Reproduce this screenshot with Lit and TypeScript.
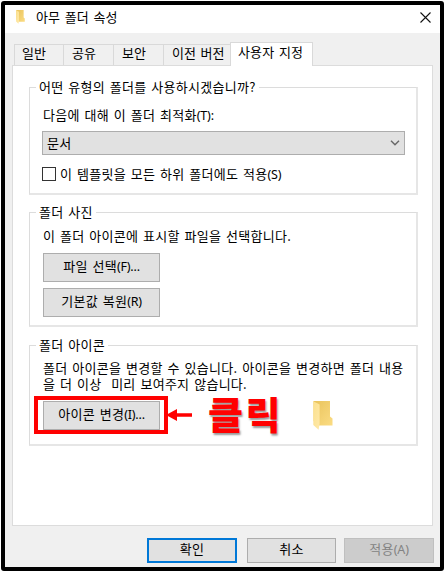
import { LitElement, html, css } from "lit";
import { customElement, property } from "lit/decorators.js";

@customElement("folder-icon")
class FolderIcon extends LitElement {
  static styles = css`
    :host { display: block; }
    svg { display: block; width: 100%; height: 100%; }
  `;
  render() {
    return html`<svg viewBox="0 0 20 29" preserveAspectRatio="none">
      <defs>
        <linearGradient id="back" x1="0" y1="0" x2="1" y2="1">
          <stop offset="0" stop-color="#e9c35c"></stop>
          <stop offset="1" stop-color="#fbdc83"></stop>
        </linearGradient>
        <linearGradient id="flap" x1="0" y1="0" x2="1" y2="1">
          <stop offset="0" stop-color="#fbe08e"></stop>
          <stop offset="1" stop-color="#ffe9a8"></stop>
        </linearGradient>
      </defs>
      <path d="M.5 0H17V15.5L19.5 17.5V24.5H6L.5 20Z" fill="url(#back)"></path>
      <path d="M.3.3L6.6 3.5V22.5L5.6 28.7L.3 24Z" fill="url(#flap)"></path>
    </svg>`;
  }
}

@customElement("push-button")
class PushButton extends LitElement {
  @property({ reflect: true }) kind = "normal";
  static styles = css`
    :host { display: block; box-sizing: border-box; }
    button {
      display: flex; align-items: center; justify-content: center;
      box-sizing: border-box; width: 100%; height: 100%; margin: 0; padding: 0 0 3px;
      border: 1px solid #adadad; background: #e1e1e1; color: #000;
      font: inherit; letter-spacing: inherit; word-spacing: inherit; white-space: nowrap;
    }
    :host([kind="primary"]) button { border: 2px solid #0078d7; }
    :host([kind="disabled"]) button { background: #ccc; border-color: #bfbfbf; color: #838383; }
  `;
  render() {
    return html`<button ?disabled=${this.kind === "disabled"}><span><slot></slot></span></button>`;
  }
}

@customElement("app-root")
class AppRoot extends LitElement {
  static styles = css`
    :host {
      display: block; box-sizing: border-box; width: 445px; height: 572px; padding: 1px;
      background: #fff; color: #000; overflow: hidden;
      font: 13px/16px "Noto Sans CJK KR", sans-serif;
      letter-spacing: .28px; word-spacing: 1.6px;
    }
    .window {
      box-sizing: border-box; width: 443px; height: 570px; border: 4px solid #000;
      border-radius: 3px; background: #f0f0f0; display: flex; flex-direction: column;
    }
    .title { height: 28px; flex: none; background: #fff; display: flex; align-items: center; padding: 0 9px 4px 11px; box-sizing: border-box; }
    .title folder-icon { width: 9px; height: 14px; margin-right: 11px; }
    .title span { flex: 1; margin-top: -1px; letter-spacing: .1px; }
    .close { width: 11px; height: 11px; }
    .tabs { height: 32px; flex: none; display: flex; align-items: flex-end; padding-left: 9px; box-sizing: border-box; }
    .tab {
      box-sizing: border-box; height: 21px; width: 50px; border: 1px solid #d9d9d9; border-width: 1px 1px 0 0;
      padding: 0 0 0 8px; white-space: nowrap; letter-spacing: 0;
    }
    .tab:first-child { border-left-width: 1px; padding-left: 7px; }
    .tab.wide { width: 66px; border-right: 0; }
    .tab.on { width: 83px; height: 24px; margin-bottom: -1px; border-width: 1px 1px 0 1px; background: #fff; padding: 1px 0 0 7px; position: relative; letter-spacing: .15px; }
    .page {
      flex: none; box-sizing: border-box; height: 461px; width: 421px; margin-left: 7px;
      border: 1px solid #dcdcdc; background: #fff; padding: 21px 14px 0 16px;
      display: flex; flex-direction: column;
    }
    .group {
      box-sizing: border-box; border: 1px solid #dcdcdc; border-right: 2px solid #e6e6e6; border-bottom: 2px solid #e6e6e6;
      width: 389px; padding: 0 12px 0 13px; flex: none; display: flex; flex-direction: column; align-items: flex-start;
    }
    .g1 { height: 108px; }
    .g2 { height: 115px; margin-top: 17px; }
    .g3 { height: 101px; margin-top: 18px; }
    .legend { margin: -9px 0 0 -7px; padding: 0 3px; background: #fff; height: 16px; white-space: nowrap; }
    .line { white-space: nowrap; height: 16px; }
    .g1 .line { margin-top: 12px; }
    .select {
      box-sizing: border-box; width: 363px; height: 24px; margin: 8px 0 0 -1px; border: 1px solid #adadad; background: #e1e1e1;
      display: flex; align-items: center; justify-content: space-between; padding: 0 4px 1px;
    }
    .chevron { width: 10px; height: 6px; }
    .check { display: flex; align-items: center; height: 16px; margin: 11px 0 0 -1px; white-space: nowrap; }
    .box { box-sizing: border-box; width: 14px; height: 14px; border: 1px solid #333; background: #fff; margin-right: 4px; }
    .g2 .line { margin-top: 8px; }
    .g2 push-button { width: 117px; height: 29px; margin-top: 9px; }
    .g2 push-button + push-button { margin-top: 6px; }
    .g3 .para { margin-top: 7px; white-space: pre; }
    .row { display: flex; align-items: center; margin: 4px 0 0 -9px; height: 38px; }
    .mark { box-sizing: border-box; width: 134px; height: 38px; border: 4px solid #f00; padding: 1px 4px 0 5px; }
    .mark push-button { width: 117px; height: 29px; }
    .arrow { width: 26px; height: 14px; margin-left: -2px; }
    .click {
      width: 72px; margin: -4px 0 0 16px; white-space: nowrap; color: #f00; font-weight: 900; font-size: 38px; line-height: 38px;
      letter-spacing: 2.5px; text-shadow: 1px 2px 2px #999;
    }
    .row folder-icon { width: 20px; height: 29px; margin: 0 0 0 33px; }
    .footer { display: flex; margin: 12px 0 0 142px; }
    .footer push-button { width: 90px; height: 25px; }
    .footer push-button:nth-child(2) { width: 89px; margin: 0 8px 0 10px; }
    .latin { font-family: "Noto Sans", sans-serif; font-size: 12.5px; letter-spacing: -.2px; line-height: 1; }
  `;

  render() {
    return html`<div class="window">
      <div class="title">
        <folder-icon></folder-icon><span>아무 폴더 속성</span>
        <svg class="close" viewBox="0 0 11 11"><path d="M.5 .5L10.5 10.5M10.5 .5L.5 10.5" stroke="#111" stroke-width="1.1"></path></svg>
      </div>
      <div class="tabs">
        <div class="tab">일반</div>
        <div class="tab">공유</div>
        <div class="tab">보안</div>
        <div class="tab wide">이전 버전</div>
        <div class="tab on">사용자 지정</div>
      </div>
      <div class="page">
        <div class="group g1">
          <div class="legend">어떤 유형의 폴더를 사용하시겠습니까?</div>
          <div class="line">다음에 대해 이 폴더 최적화<span class="latin">(T):</span></div>
          <div class="select">
            <span>문서</span>
            <svg class="chevron" viewBox="0 0 10 6"><path d="M1 .8L5 4.8L9 .8" fill="none" stroke="#666" stroke-width="1.4"></path></svg>
          </div>
          <div class="check"><span class="box"></span><span>이 템플릿을 모든 하위 폴더에도 적용<span class="latin">(S)</span></span></div>
        </div>
        <div class="group g2">
          <div class="legend">폴더 사진</div>
          <div class="line">이 폴더 아이콘에 표시할 파일을 선택합니다.</div>
          <push-button>파일 선택<span class="latin">(F)...</span></push-button>
          <push-button>기본값 복원<span class="latin">(R)</span></push-button>
        </div>
        <div class="group g3">
          <div class="legend">폴더 아이콘</div>
          <div class="para">폴더 아이콘을 변경할 수 있습니다. 아이콘을 변경하면 폴더 내용<br>을 더 이상  미리 보여주지 않습니다.</div>
          <div class="row">
            <div class="mark"><push-button>아이콘 변경<span class="latin">(I)...</span></push-button></div>
            <svg class="arrow" viewBox="0 0 26 14"><path d="M0 7L11 1V5.2H26V8.8H11V13Z" fill="#f00"></path></svg>
            <div class="click">클릭</div>
            <folder-icon></folder-icon>
          </div>
        </div>
      </div>
      <div class="footer">
        <push-button kind="primary">확인</push-button>
        <push-button>취소</push-button>
        <push-button kind="disabled">적용<span class="latin">(A)</span></push-button>
      </div>
    </div>`;
  }
}
